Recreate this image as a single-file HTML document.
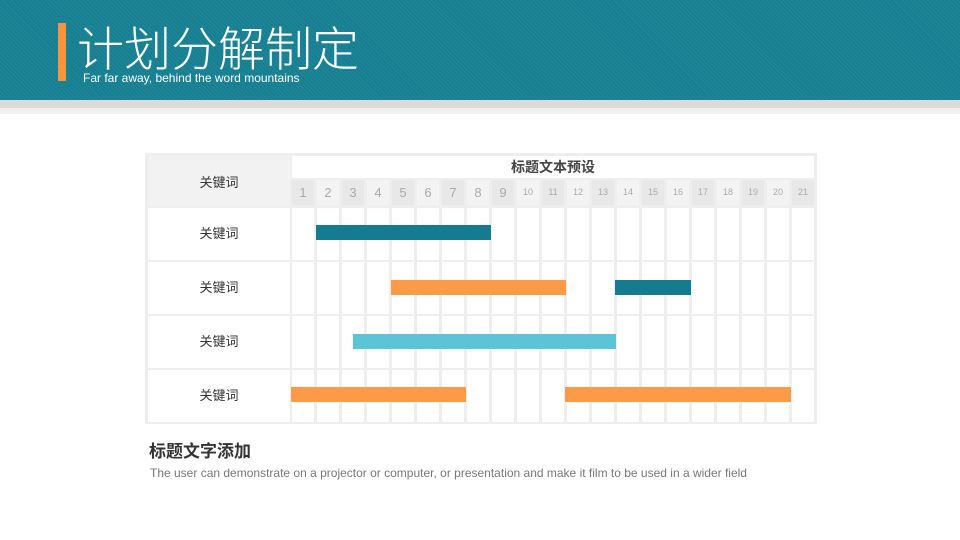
<!DOCTYPE html>
<html><head><meta charset="utf-8"><style>
*{margin:0;padding:0;box-sizing:border-box}
body{width:960px;height:540px;position:relative;overflow:hidden;background:#fff;font-family:"Liberation Sans","Noto Sans CJK SC",sans-serif}
.a{position:absolute}
.hdr{left:0;top:0;width:960px;height:100px;background:#167f92;background-image:repeating-linear-gradient(45deg,rgba(255,255,255,.05) 0 1px,transparent 1px 3px)}
.cols{background:repeating-linear-gradient(90deg,#fff 0 22px,#eee 22px 25px)}
.lab{left:148px;width:142px;background:#fff;font-size:13px;color:#333;display:flex;align-items:center;justify-content:center;padding-bottom:4px}
.bar{height:15px}
.nums{left:292px;top:180px;width:525px;height:25px;background:repeating-linear-gradient(90deg,#e8e8e8 0 22px,#eee 22px 25px,#f3f3f3 25px 47px,#eee 47px 50px);display:flex}
.nums span{width:25px;padding-right:3px;text-align:center;color:#aaa;line-height:25px;font-size:13px}
.nums span.s{font-size:9px}
</style></head><body>
<div class="a hdr"></div>
<div class="a" style="left:0;top:100px;width:960px;height:8px;background:#dadada"></div>
<div class="a" style="left:0;top:108px;width:960px;height:6px;background:#efefef"></div>
<div class="a" style="left:58px;top:23px;width:8px;height:58px;background:#f7953f"></div>
<div class="a" style="left:77px;top:17px;font-size:47px;line-height:58px;color:#fff;font-family:'Noto Sans CJK SC',sans-serif;font-weight:300">计划分解制定</div>
<div class="a" style="left:83px;top:71px;font-size:12px;color:#fff">Far far away, behind the word mountains</div>

<div class="a" style="left:145px;top:153px;width:672px;height:271px;background:#eee"></div>
<div class="a" style="left:148px;top:156px;width:142px;height:50px;background:#f2f2f2;font-size:13px;color:#333;display:flex;align-items:center;justify-content:center">关键词</div>
<div class="a" style="left:292px;top:156px;width:522px;height:22px;background:#fff;text-align:center;font-size:14px;font-weight:bold;color:#444;line-height:22px">标题文本预设</div>
<div class="a nums"><span>1</span><span>2</span><span>3</span><span>4</span><span>5</span><span>6</span><span>7</span><span>8</span><span>9</span><span class="s">10</span><span class="s">11</span><span class="s">12</span><span class="s">13</span><span class="s">14</span><span class="s">15</span><span class="s">16</span><span class="s">17</span><span class="s">18</span><span class="s">19</span><span class="s">20</span><span class="s">21</span></div>

<div class="a lab" style="top:208px;height:52px">关键词</div>
<div class="a cols" style="left:292px;top:208px;width:525px;height:52px"></div>
<div class="a lab" style="top:262px;height:52px">关键词</div>
<div class="a cols" style="left:292px;top:262px;width:525px;height:52px"></div>
<div class="a lab" style="top:316px;height:52px">关键词</div>
<div class="a cols" style="left:292px;top:316px;width:525px;height:52px"></div>
<div class="a lab" style="top:370px;height:52px">关键词</div>
<div class="a cols" style="left:292px;top:370px;width:525px;height:52px"></div>
<div class="a" style="left:814px;top:153px;width:3px;height:271px;background:#eee"></div>

<div class="a bar" style="left:316px;top:225px;width:175px;background:#167b8e"></div>
<div class="a bar" style="left:391px;top:280px;width:175px;background:#fb9b48"></div>
<div class="a bar" style="left:615px;top:280px;width:76px;background:#167b8e"></div>
<div class="a bar" style="left:353px;top:334px;width:263px;background:#5bc4d6"></div>
<div class="a bar" style="left:291px;top:387px;width:175px;background:#fb9b48"></div>
<div class="a bar" style="left:565px;top:387px;width:226px;background:#fb9b48"></div>

<div class="a" style="left:149px;top:437px;font-size:17px;font-weight:bold;color:#333">标题文字添加</div>
<div class="a" style="left:150px;top:466px;font-size:12px;color:#777">The user can demonstrate on a projector or computer, or presentation and make it film to be used in a wider field</div>
</body></html>
